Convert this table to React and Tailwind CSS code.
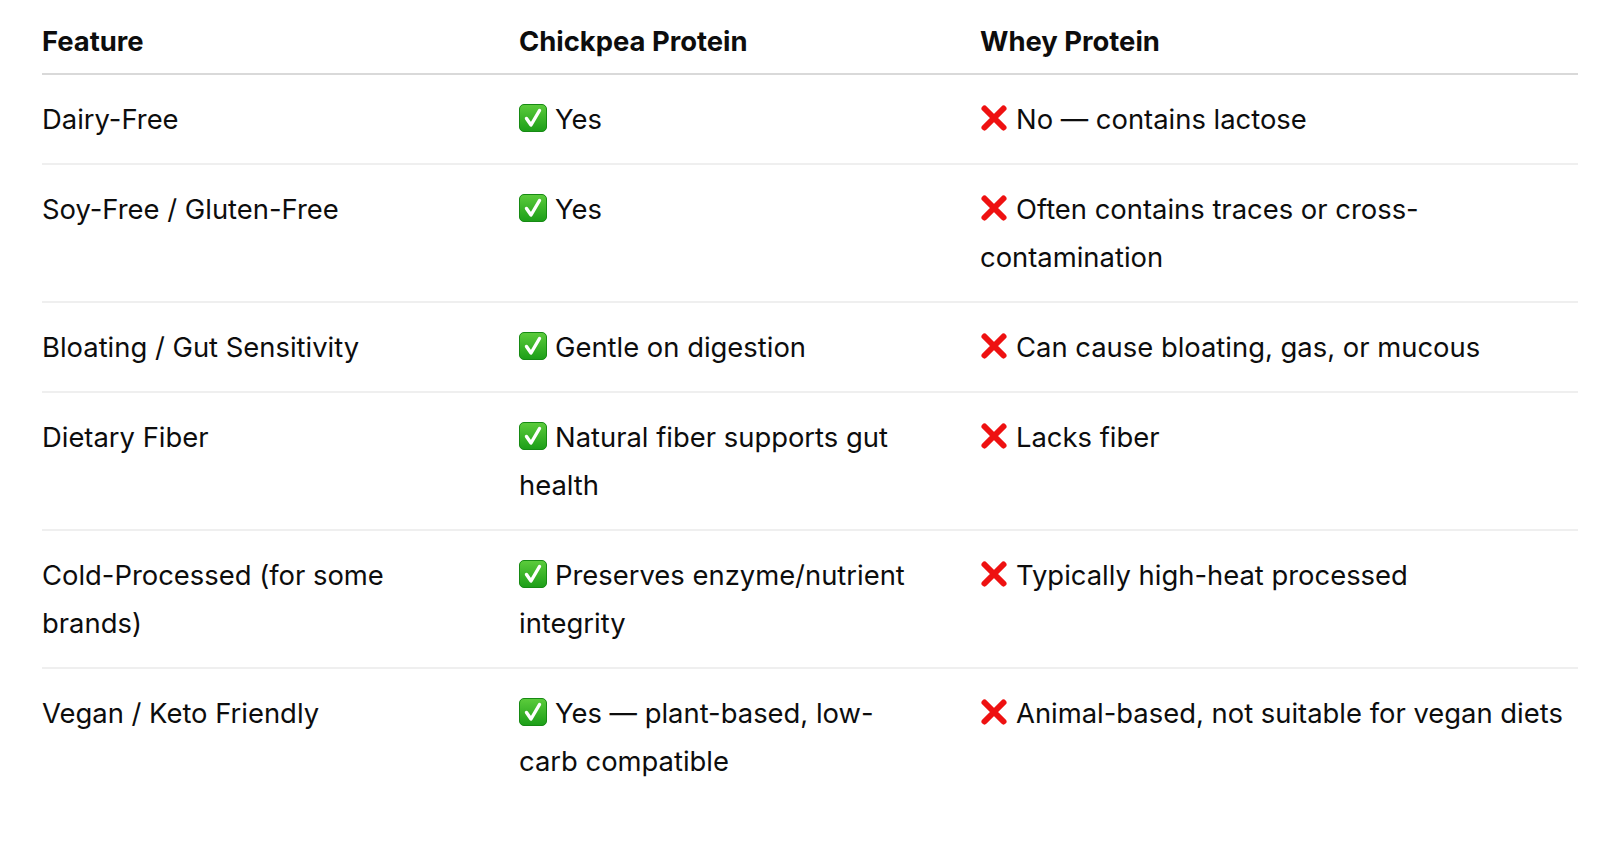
import React from 'react';

function Check() {
  return (
    <svg width="28" height="28" viewBox="0 0 28 28" className="inline-block align-[-3px] mr-[8px]">
      <defs>
        <linearGradient id="chkg" x1="0" y1="0" x2="0" y2="1">
          <stop offset="0" stopColor="#5ccc3c" />
          <stop offset="1" stopColor="#1c9e18" />
        </linearGradient>
      </defs>
      <rect x="0.5" y="0.5" width="27" height="27" rx="4.5" fill="url(#chkg)" stroke="#178a14" strokeWidth="1" />
      <path d="M7.5 14.5 L12 21 L20.5 6.5" fill="none" stroke="#fff" strokeWidth="3.4" strokeLinecap="round" strokeLinejoin="round" />
    </svg>
  );
}

function Cross() {
  return (
    <svg width="28" height="28" viewBox="0 0 28 28" className="inline-block align-[-3px] mr-[8px]">
      <path d="M4.5 4.5 L23.5 23.5 M23.5 4.5 L4.5 23.5" fill="none" stroke="#ee1111" strokeWidth="6" strokeLinecap="round" />
    </svg>
  );
}

const rows = [
  { feature: 'Dairy-Free', chickpea: 'Yes', whey: 'No — contains lactose' },
  { feature: 'Soy-Free / Gluten-Free', chickpea: 'Yes', whey: 'Often contains traces or cross-contamination' },
  { feature: 'Bloating / Gut Sensitivity', chickpea: 'Gentle on digestion', whey: 'Can cause bloating, gas, or mucous' },
  { feature: 'Dietary Fiber', chickpea: 'Natural fiber supports gut health', whey: 'Lacks fiber' },
  { feature: 'Cold-Processed (for some brands)', chickpea: 'Preserves enzyme/nutrient integrity', whey: 'Typically high-heat processed' },
  { feature: 'Vegan / Keto Friendly', chickpea: 'Yes — plant-based, low-carb compatible', whey: 'Animal-based, not suitable for vegan diets' },
];

export default function App() {
  return (
    <div className="min-h-screen bg-white pl-[42px] text-[#0d0d0d] font-['Inter','Liberation_Sans',sans-serif] text-[27.4px] leading-[48px]">
      <table className="table-fixed border-collapse w-[1536px]">
        <colgroup>
          <col className="w-[477px]" />
          <col className="w-[461px]" />
          <col className="w-[598px]" />
        </colgroup>
        <thead>
          <tr className="border-b-2 border-[#d9d9d9]">
            <th className="text-left font-bold pt-[17px] pb-[8px] pr-[70px]">Feature</th>
            <th className="text-left font-bold pt-[17px] pb-[8px] pr-[55px]">Chickpea Protein</th>
            <th className="text-left font-bold pt-[17px] pb-[8px] pr-0">Whey Protein</th>
          </tr>
        </thead>
        <tbody>
          {rows.map((r, i) => (
            <tr key={r.feature} className={i < rows.length - 1 ? 'border-b-2 border-[#efefef]' : ''}>
              <td className="align-top py-5 pr-[70px]">{r.feature}</td>
              <td className="align-top py-5 pr-[55px]"><Check />{r.chickpea}</td>
              <td className="align-top py-5 pr-0"><Cross />{r.whey}</td>
            </tr>
          ))}
        </tbody>
      </table>
    </div>
  );
}
